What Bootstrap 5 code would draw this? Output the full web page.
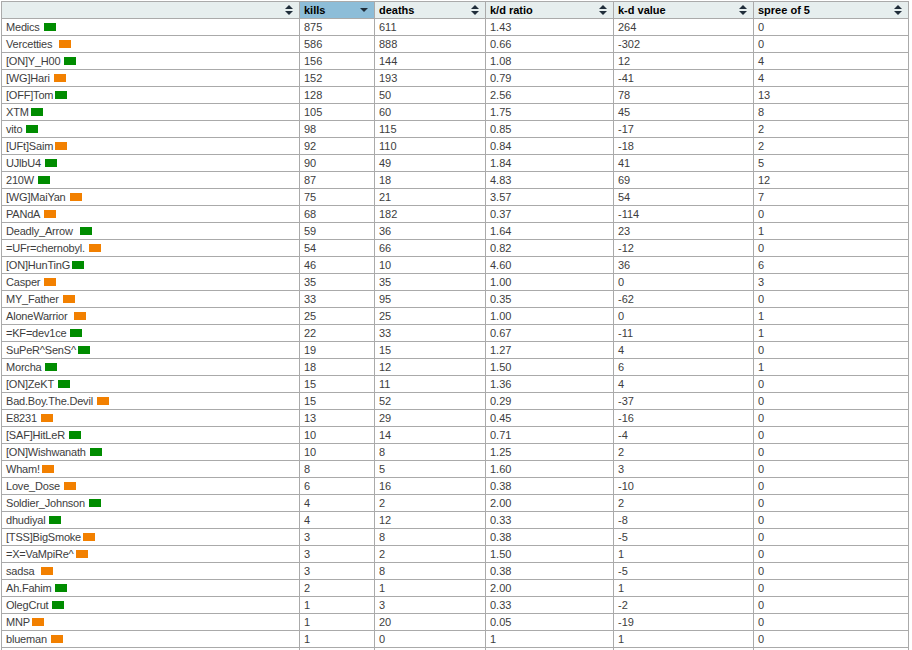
<!DOCTYPE html>
<html lang="en">
<head>
<meta charset="utf-8">
<title>Player stats</title>
<link href="https://cdn.jsdelivr.net/npm/bootstrap@5.3.0/dist/css/bootstrap.min.css" rel="stylesheet">
<style>
body{margin:0;padding:1px 0 0 1px;background:#fff;font-family:"Liberation Sans",Arial,sans-serif;font-size:11px;color:#3d3d3d}
.stats{width:907px;table-layout:fixed;border-collapse:collapse;margin:0;font-size:11px;line-height:13px;--bs-table-bg:#fff;--bs-table-color:#3d3d3d}
.stats>thead>tr>th,.stats>tbody>tr>td{border:1px solid #aaa;height:17px;padding:0 4px;vertical-align:middle;box-shadow:none}
.stats>tbody>tr>td:first-child{letter-spacing:-.2px}
.stats>thead>tr>th{background:#e6eeee;color:#000;font-weight:700}
.stats>thead>tr>th.sorted{background:#8dbdd8}
.hcell{display:flex;align-items:center;justify-content:space-between;padding-right:2px}
.hcell svg{flex:none}
.pbar{display:inline-block;width:12px;height:8px;margin-left:4px;vertical-align:-0.5px}
.pbar.far{margin-left:7px}
.pbar.near{margin-left:2px}
.pos{background:#008c00}
.neg{background:#f28000}
</style>
</head>
<body class="vh-100 overflow-hidden">
<table class="table stats">
<colgroup><col style="width:298px"><col style="width:75px"><col style="width:111px"><col style="width:128px"><col style="width:140px"><col style="width:155px"></colgroup>
<thead><tr>
<th><div class="hcell"><span></span><svg width="8" height="10" viewBox="0 0 8 10"><path d="M4 0 8 4H0ZM0 6H8L4 10Z" fill="#1f2d3a"/></svg></div></th>
<th class="sorted"><div class="hcell"><span>kills</span><svg width="8" height="4" viewBox="0 0 8 4"><path d="M0 0H8L4 4Z" fill="#1f2d3a"/></svg></div></th>
<th><div class="hcell"><span>deaths</span><svg width="8" height="10" viewBox="0 0 8 10"><path d="M4 0 8 4H0ZM0 6H8L4 10Z" fill="#1f2d3a"/></svg></div></th>
<th><div class="hcell"><span>k/d ratio</span><svg width="8" height="10" viewBox="0 0 8 10"><path d="M4 0 8 4H0ZM0 6H8L4 10Z" fill="#1f2d3a"/></svg></div></th>
<th><div class="hcell"><span>k-d value</span><svg width="8" height="10" viewBox="0 0 8 10"><path d="M4 0 8 4H0ZM0 6H8L4 10Z" fill="#1f2d3a"/></svg></div></th>
<th><div class="hcell"><span>spree of 5</span><svg width="8" height="10" viewBox="0 0 8 10"><path d="M4 0 8 4H0ZM0 6H8L4 10Z" fill="#1f2d3a"/></svg></div></th>
</tr></thead>
<tbody>
<tr><td>Medics<span class="pbar pos"></span></td><td>875</td><td>611</td><td>1.43</td><td>264</td><td>0</td></tr>
<tr><td>Vercetties<span class="pbar neg far"></span></td><td>586</td><td>888</td><td>0.66</td><td>-302</td><td>0</td></tr>
<tr><td>[ON]Y_H00<span class="pbar pos"></span></td><td>156</td><td>144</td><td>1.08</td><td>12</td><td>4</td></tr>
<tr><td>[WG]Hari<span class="pbar neg"></span></td><td>152</td><td>193</td><td>0.79</td><td>-41</td><td>4</td></tr>
<tr><td>[OFF]Tom<span class="pbar pos near"></span></td><td>128</td><td>50</td><td>2.56</td><td>78</td><td>13</td></tr>
<tr><td>XTM<span class="pbar pos near"></span></td><td>105</td><td>60</td><td>1.75</td><td>45</td><td>8</td></tr>
<tr><td>vito<span class="pbar pos"></span></td><td>98</td><td>115</td><td>0.85</td><td>-17</td><td>2</td></tr>
<tr><td>[UFt]Saim<span class="pbar neg near"></span></td><td>92</td><td>110</td><td>0.84</td><td>-18</td><td>2</td></tr>
<tr><td>UJlbU4<span class="pbar pos"></span></td><td>90</td><td>49</td><td>1.84</td><td>41</td><td>5</td></tr>
<tr><td>210W<span class="pbar pos"></span></td><td>87</td><td>18</td><td>4.83</td><td>69</td><td>12</td></tr>
<tr><td>[WG]MaiYan<span class="pbar neg"></span></td><td>75</td><td>21</td><td>3.57</td><td>54</td><td>7</td></tr>
<tr><td>PANdA<span class="pbar neg"></span></td><td>68</td><td>182</td><td>0.37</td><td>-114</td><td>0</td></tr>
<tr><td>Deadly_Arrow<span class="pbar pos far"></span></td><td>59</td><td>36</td><td>1.64</td><td>23</td><td>1</td></tr>
<tr><td>=UFr=chernobyl.<span class="pbar neg"></span></td><td>54</td><td>66</td><td>0.82</td><td>-12</td><td>0</td></tr>
<tr><td>[ON]HunTinG<span class="pbar pos near"></span></td><td>46</td><td>10</td><td>4.60</td><td>36</td><td>6</td></tr>
<tr><td>Casper<span class="pbar neg"></span></td><td>35</td><td>35</td><td>1.00</td><td>0</td><td>3</td></tr>
<tr><td>MY_Father<span class="pbar neg"></span></td><td>33</td><td>95</td><td>0.35</td><td>-62</td><td>0</td></tr>
<tr><td>AloneWarrior<span class="pbar neg far"></span></td><td>25</td><td>25</td><td>1.00</td><td>0</td><td>1</td></tr>
<tr><td>=KF=dev1ce<span class="pbar pos"></span></td><td>22</td><td>33</td><td>0.67</td><td>-11</td><td>1</td></tr>
<tr><td>SuPeR^SenS^<span class="pbar pos near"></span></td><td>19</td><td>15</td><td>1.27</td><td>4</td><td>0</td></tr>
<tr><td>Morcha<span class="pbar pos"></span></td><td>18</td><td>12</td><td>1.50</td><td>6</td><td>1</td></tr>
<tr><td>[ON]ZeKT<span class="pbar pos"></span></td><td>15</td><td>11</td><td>1.36</td><td>4</td><td>0</td></tr>
<tr><td>Bad.Boy.The.Devil<span class="pbar neg"></span></td><td>15</td><td>52</td><td>0.29</td><td>-37</td><td>0</td></tr>
<tr><td>E8231<span class="pbar neg"></span></td><td>13</td><td>29</td><td>0.45</td><td>-16</td><td>0</td></tr>
<tr><td>[SAF]HitLeR<span class="pbar pos"></span></td><td>10</td><td>14</td><td>0.71</td><td>-4</td><td>0</td></tr>
<tr><td>[ON]Wishwanath<span class="pbar pos"></span></td><td>10</td><td>8</td><td>1.25</td><td>2</td><td>0</td></tr>
<tr><td>Wham!<span class="pbar neg near"></span></td><td>8</td><td>5</td><td>1.60</td><td>3</td><td>0</td></tr>
<tr><td>Love_Dose<span class="pbar neg"></span></td><td>6</td><td>16</td><td>0.38</td><td>-10</td><td>0</td></tr>
<tr><td>Soldier_Johnson<span class="pbar pos"></span></td><td>4</td><td>2</td><td>2.00</td><td>2</td><td>0</td></tr>
<tr><td>dhudiyal<span class="pbar pos"></span></td><td>4</td><td>12</td><td>0.33</td><td>-8</td><td>0</td></tr>
<tr><td>[TSS]BigSmoke<span class="pbar neg near"></span></td><td>3</td><td>8</td><td>0.38</td><td>-5</td><td>0</td></tr>
<tr><td>=X=VaMpiRe^<span class="pbar neg near"></span></td><td>3</td><td>2</td><td>1.50</td><td>1</td><td>0</td></tr>
<tr><td>sadsa<span class="pbar neg far"></span></td><td>3</td><td>8</td><td>0.38</td><td>-5</td><td>0</td></tr>
<tr><td>Ah.Fahim<span class="pbar pos"></span></td><td>2</td><td>1</td><td>2.00</td><td>1</td><td>0</td></tr>
<tr><td>OlegCrut<span class="pbar pos"></span></td><td>1</td><td>3</td><td>0.33</td><td>-2</td><td>0</td></tr>
<tr><td>MNP<span class="pbar neg near"></span></td><td>1</td><td>20</td><td>0.05</td><td>-19</td><td>0</td></tr>
<tr><td>blueman<span class="pbar neg"></span></td><td>1</td><td>0</td><td>1</td><td>1</td><td>0</td></tr>
<tr><td></td><td></td><td></td><td></td><td></td><td></td></tr>
</tbody>
</table>
<script src="https://cdn.jsdelivr.net/npm/bootstrap@5.3.0/dist/js/bootstrap.bundle.min.js"></script>
</body>
</html>
